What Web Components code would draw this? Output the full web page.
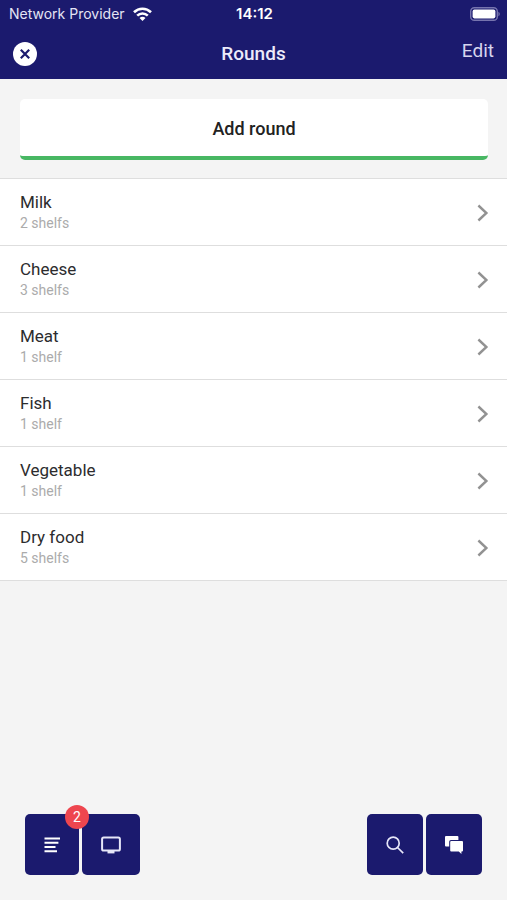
<!DOCTYPE html>
<html lang="en">
<head>
<meta charset="utf-8">
<meta name="viewport" content="width=device-width, initial-scale=1">
<title>Rounds</title>
<style>
  body {
    margin: 0;
    font-family: Roboto, "Liberation Sans", sans-serif;
    background: #f4f4f4;
    color: #2c2c2e;
  }
</style>
</head>
<body>
<rounds-app></rounds-app>

<script>
class StatusBar extends HTMLElement {
  constructor () {
    super()
    this.attachShadow({ mode: 'open' })
  }

  connectedCallback () {
    this.shadowRoot.innerHTML =
    /* html */`
    <style>
      :host {
        display: grid;
        grid-template-columns: 1fr auto 1fr;
        align-items: center;
        height: 28px;
        padding: 0 7px 0 9px;
        font: 14px/20px Inter, "Liberation Sans", sans-serif;
        color: #e4e4f4;
      }

      .carrier {
        display: flex;
        align-items: center;
        gap: 8px;
        white-space: nowrap;
      }

      .time {
        font-size: 15px;
        font-weight: 600;
        color: #fff;
      }

      svg {
        display: block;
      }

      .battery {
        justify-self: end;
      }
    </style>

    <span class="carrier">
      <slot name="carrier"></slot>
      <svg width="19" height="14" viewBox="0 0 19 14" fill="none" stroke="#fff" stroke-width="2.6">
        <path d="M1 5.2C5.8 .5 13.2 .5 18 5.2"/>
        <path d="M4.2 8.6C7.2 5.7 11.8 5.7 14.8 8.6"/>
        <path d="M9.5 14L6.5 10.9C8.2 9.3 10.8 9.3 12.5 10.9Z" fill="#fff" stroke="none"/>
      </svg>
    </span>
    <span class="time"><slot name="time"></slot></span>
    <svg class="battery" width="30" height="14" viewBox="0 0 30 14">
      <rect x=".7" y=".7" width="26.6" height="12.6" rx="3.6" fill="none" stroke="#7674ae" stroke-width="1.4"/>
      <rect x="2.6" y="2.6" width="22.8" height="8.8" rx="1.8" fill="#fff"/>
      <path d="M28.4 4.7C30.2 5.6 30.2 8.4 28.4 9.3Z" fill="#7674ae"/>
    </svg>
    `
  }
}

customElements.define('status-bar', StatusBar)

class NavBar extends HTMLElement {
  constructor () {
    super()
    this.attachShadow({ mode: 'open' })
  }

  connectedCallback () {
    this.shadowRoot.innerHTML =
    /* html */`
    <style>
      :host {
        display: grid;
        grid-template-columns: 1fr auto 1fr;
        align-items: center;
        height: 51px;
        padding: 0 13px;
        color: #fff;
      }

      button {
        padding: 0;
        border: none;
        background: none;
        font: inherit;
        color: #d6d5ee;
        cursor: pointer;
      }

      .close {
        justify-self: start;
      }

      .close svg {
        display: block;
      }

      h1,
      .action {
        font-size: 19px;
        line-height: 24px;
      }

      h1 {
        margin: 0;
        font-weight: 500;
        color: #ecebfa;
      }

      .action {
        justify-self: end;
        align-self: start;
        margin-top: 11px;
      }
    </style>

    <button class="close" type="button" aria-label="Close">
      <svg width="24" height="24" viewBox="0 0 24 24">
        <circle cx="12" cy="12" r="12" fill="#fff"/>
        <path d="M7.8 7.8L16.2 16.2M16.2 7.8L7.8 16.2" stroke="#1b1a6e" stroke-width="2.2"/>
      </svg>
    </button>
    <h1><slot></slot></h1>
    <button class="action" type="button"><slot name="action"></slot></button>
    `
  }
}

customElements.define('nav-bar', NavBar)

class AddButton extends HTMLElement {
  constructor () {
    super()
    this.attachShadow({ mode: 'open' })
  }

  connectedCallback () {
    this.shadowRoot.innerHTML =
    /* html */`
    <style>
      :host {
        display: block;
        padding: 20px 19px 18px 20px;
      }

      button {
        display: block;
        width: 100%;
        height: 61px;
        padding: 2px 0 0;
        border: none;
        border-bottom: 4px solid #48b763;
        border-radius: 5px;
        background: #fff;
        font: 500 18px/24px Roboto, "Liberation Sans", sans-serif;
        color: #222;
        cursor: pointer;
      }
    </style>

    <button type="button"><slot></slot></button>
    `
  }
}

customElements.define('add-button', AddButton)

class RoundItem extends HTMLElement {
  constructor () {
    super()
    this.attachShadow({ mode: 'open' })
  }

  connectedCallback () {
    this.shadowRoot.innerHTML =
    /* html */`
    <style>
      :host {
        display: block;
        border-bottom: 1px solid #dedede;
        background: #fff;
      }

      a {
        display: flex;
        align-items: center;
        justify-content: space-between;
        padding: 13px 18px 12px 20px;
        color: inherit;
        text-decoration: none;
      }

      .name,
      .shelves {
        display: block;
      }

      .name {
        font-size: 17px;
        line-height: 21px;
      }

      .shelves {
        font-size: 14px;
        line-height: 20px;
        color: #ababab;
      }

      svg {
        display: block;
      }
    </style>

    <a href="#">
      <span>
        <span class="name"><slot></slot></span>
        <span class="shelves"><slot name="shelves"></slot></span>
      </span>
      <svg width="12" height="18" viewBox="0 0 12 18" fill="none" stroke="#929292" stroke-width="2.4">
        <path d="M1.4 1.5L9.4 9L1.4 16.5"/>
      </svg>
    </a>
    `
  }
}

customElements.define('round-item', RoundItem)

class TabButton extends HTMLElement {
  constructor () {
    super()
    this.attachShadow({ mode: 'open' })
  }

  connectedCallback () {
    const label = this.getAttribute('label') || ''

    this.shadowRoot.innerHTML =
    /* html */`
    <style>
      :host {
        display: block;
        position: relative;
      }

      button {
        display: flex;
        align-items: center;
        height: 61px;
        padding: 0 19px;
        border: none;
        border-radius: 5px;
        background: #1b1a6e;
        cursor: pointer;
      }

      ::slotted(svg) {
        display: block;
      }

      /* sits on the top right corner of the button */
      ::slotted([slot="badge"]) {
        position: absolute;
        z-index: 1;
        top: -9px;
        right: -10px;
        width: 24px;
        border-radius: 50%;
        background: #ee464f;
        font-size: 14px;
        line-height: 24px;
        text-align: center;
        color: #fff;
      }
    </style>

    <button type="button" aria-label="${label}"><slot></slot></button>
    <slot name="badge"></slot>
    `
  }
}

customElements.define('tab-button', TabButton)

class RoundsApp extends HTMLElement {
  constructor () {
    super()
    this.attachShadow({ mode: 'open' })
    this.rounds = [
      { name: 'Milk', shelves: '2 shelfs' },
      { name: 'Cheese', shelves: '3 shelfs' },
      { name: 'Meat', shelves: '1 shelf' },
      { name: 'Fish', shelves: '1 shelf' },
      { name: 'Vegetable', shelves: '1 shelf' },
      { name: 'Dry food', shelves: '5 shelfs' }
    ]
  }

  connectedCallback () {
    this.render()
  }

  render () {
    this.shadowRoot.innerHTML =
    /* html */`
    <style>
      :host {
        display: flex;
        flex-direction: column;
        min-height: 100vh;
      }

      header {
        background: #1b1a6e;
      }

      main {
        flex: 1;
      }

      .list {
        border-top: 1px solid #dedede;
      }

      footer {
        display: flex;
        justify-content: space-between;
        padding: 25px;
      }

      .group {
        display: flex;
        gap: 3px;
      }
    </style>

    <header>
      <status-bar>
        <span slot="carrier">Network Provider</span>
        <span slot="time">14:12</span>
      </status-bar>
      <nav-bar>Rounds<span slot="action">Edit</span></nav-bar>
    </header>

    <main>
      <add-button>Add round</add-button>
      <div class="list">
        ${this.rounds.map(round => `<round-item>${round.name}<span slot="shelves">${round.shelves}</span></round-item>`).join('')}
      </div>
    </main>

    <footer>
      <div class="group">
        <tab-button label="Tasks">
          <svg width="16" height="16" viewBox="0 0 16 16" stroke="#fff" stroke-width="2">
            <path d="M.5 1.6H16M.5 5.8H14.4M.5 10H11.5M.5 14.2H13"/>
          </svg>
          <span slot="badge">2</span>
        </tab-button>
        <tab-button label="Screen">
          <svg width="20" height="18" viewBox="0 0 20 18">
            <rect x="1.1" y="1.6" width="17.8" height="13" rx="1.6" fill="none" stroke="#e6e6f8" stroke-width="2"/>
            <path d="M6.5 15H13.5V17.4H6.5Z" fill="#e6e6f8"/>
          </svg>
        </tab-button>
      </div>
      <div class="group">
        <tab-button label="Search">
          <svg width="18" height="18" viewBox="0 0 18 18" fill="none" stroke="#e6e6f8" stroke-width="1.7">
            <circle cx="7.2" cy="7.2" r="6"/>
            <path d="M11.5 11.5L17.2 17.2"/>
          </svg>
        </tab-button>
        <tab-button label="Messages">
          <svg width="18" height="18" viewBox="0 0 18 18" fill="#fff">
            <path d="M1 0H12.4Q13.4 0 13.4 1V4H6Q4.2 4 4.2 5.8V10.6H1Q0 10.6 0 9.6V1Q0 0 1 0Z"/>
            <path d="M6.2 5H17Q18 5 18 6V14.6Q18 15.6 17 15.6H16.4V18L13.8 15.6H6.2Q5.2 15.6 5.2 14.6V6Q5.2 5 6.2 5Z"/>
          </svg>
        </tab-button>
      </div>
    </footer>
    `
  }
}

customElements.define('rounds-app', RoundsApp)
</script>
</body>
</html>
